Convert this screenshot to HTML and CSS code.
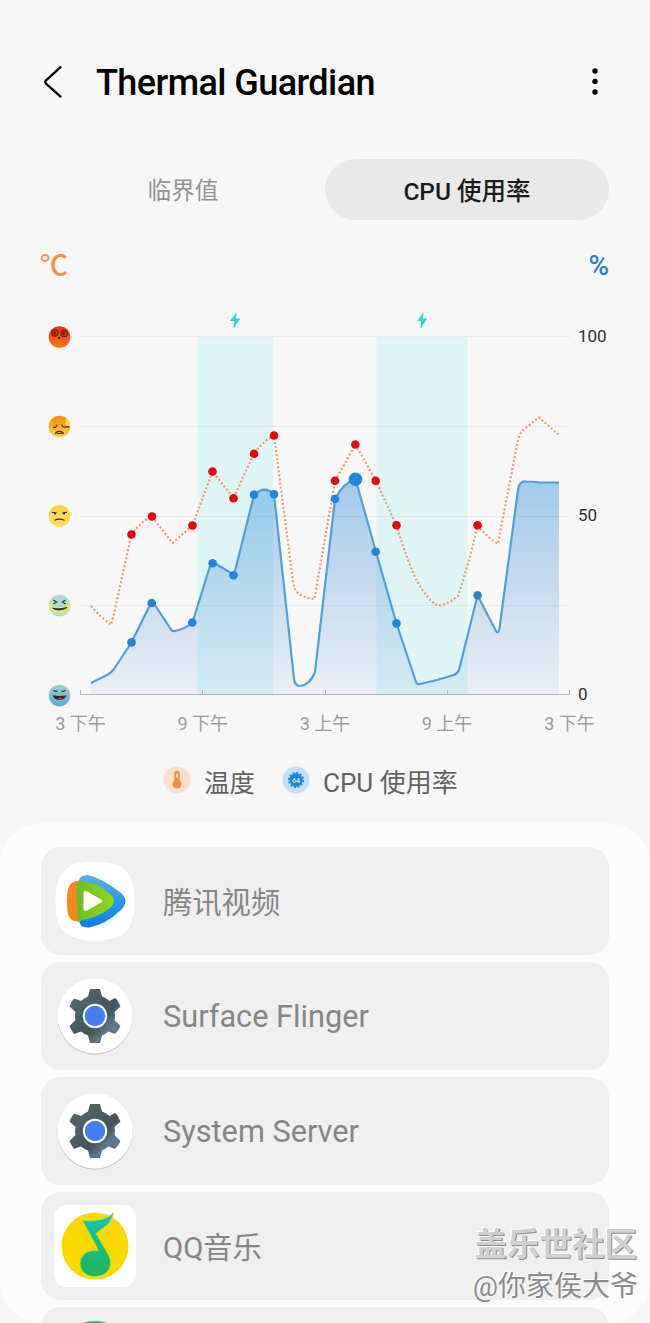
FILE: index.html
```
<!DOCTYPE html>
<html lang="zh-CN">

<head>
    <meta charset="UTF-8">
    <meta name="viewport" content="width=device-width, initial-scale=1.0">
    <title>Thermal Guardian</title>
    <link rel="stylesheet" href="styles.css">
</head>

<body>
    <header class="header">
        <svg class="back" width="20" height="34" viewBox="0 0 20 34">
            <path d="M17.5 2.2 L2.8 15.6 Q1.6 17 2.8 18.4 L17.5 31.6" />
        </svg>
        <h1 class="title">Thermal Guardian</h1>
        <svg class="more" width="8" height="28" viewBox="0 0 8 28">
            <circle cx="4" cy="3" r="2.7" />
            <circle cx="4" cy="13.5" r="2.7" />
            <circle cx="4" cy="24" r="2.7" />
        </svg>
    </header>

    <nav class="tabs">
        <div class="tab">临界值</div>
        <div class="tab active">CPU 使用率</div>
    </nav>

    <div class="units">
        <span class="unit-temp">℃</span>
        <span class="unit-cpu">%</span>
    </div>

    <svg class="chart" width="650" height="450" viewBox="0 295 650 450">
        <defs>
            <linearGradient id="area" gradientUnits="userSpaceOnUse" x1="0" y1="480" x2="0" y2="695">
                <stop offset="0" stop-color="#1b87dc" stop-opacity="0.4" />
                <stop offset="1" stop-color="#3d7ed0" stop-opacity="0.07" />
            </linearGradient>
            <linearGradient id="hot" x1="0" y1="0" x2="0" y2="1">
                <stop offset="0" stop-color="#e8301c" />
                <stop offset="1" stop-color="#ff7a0c" />
            </linearGradient>
            <linearGradient id="warm" x1="0" y1="0" x2="0" y2="1">
                <stop offset="0" stop-color="#fb8a0c" />
                <stop offset="1" stop-color="#fbd23c" />
            </linearGradient>
            <linearGradient id="mild" x1="0" y1="0" x2="0" y2="1">
                <stop offset="0" stop-color="#fbd02c" />
                <stop offset="1" stop-color="#fbe266" />
            </linearGradient>
            <radialGradient id="cool" cx="0.5" cy="0.2" r="0.75">
                <stop offset="0.45" stop-color="#a5dcd8" />
                <stop offset="0.75" stop-color="#e2ec62" />
                <stop offset="1" stop-color="#a5dcd8" />
            </radialGradient>
            <linearGradient id="cold" x1="0" y1="0" x2="0" y2="1">
                <stop offset="0" stop-color="#98d2cf" />
                <stop offset="1" stop-color="#64a9d4" />
            </linearGradient>
        </defs>

        <!-- charging periods -->
        <rect class="charging" x="197.500" y="337" width="75.500" height="358" />
        <rect class="charging" x="376.500" y="337" width="91" height="358" />
        <path class="bolt" d="M236.500 312 L230 321 H234.200 L233.500 328.500 L240.500 318.500 H236 Z" />
        <path class="bolt" d="M423.500 312 L417 321 H421.200 L420.500 328.500 L427.500 318.500 H423 Z" />

        <!-- grid -->
        <path class="grid" d="M80 336.500 H570 M80 426.500 H570 M80 516.500 H570 M80 605.500 H570" />
        <path class="axis" d="M80 694.500 H570 M80.500 690 V695 M202.500 690 V695 M325.500 690 V695 M447.500 690 V695 M569.500 690 V695" />

        <!-- cpu -->
        <path class="area" d="M91 683 L107 675 Q111 673 114 669 L131.500 642.500 L149 607 Q152 602 155 605 L170 628 Q172 632 175 631 Q185 629 192.500 622.500 L210 566 Q212.500 562 216 564 L231 573 Q233.500 576 235 571 L254 495 Q264 485 274 494 L294 679 Q295 686 300 686 Q310 685 315 672 L335 499 Q344 482 355.500 479 L376 552 L396.500 623.500 L415 679 Q416 685 420 684 L437 680 L454 675 Q457 674 459 670 L477.500 595.500 L495 629 Q498 636 499.500 628 L518 490 Q519 481 526 481.500 Q533 481.500 540 482.500 H559 V695 H91 Z" />
        <path class="line-cpu" d="M91 683 L107 675 Q111 673 114 669 L131.500 642.500 L149 607 Q152 602 155 605 L170 628 Q172 632 175 631 Q185 629 192.500 622.500 L210 566 Q212.500 562 216 564 L231 573 Q233.500 576 235 571 L254 495 Q264 485 274 494 L294 679 Q295 686 300 686 Q310 685 315 672 L335 499 Q344 482 355.500 479 L376 552 L396.500 623.500 L415 679 Q416 685 420 684 L437 680 L454 675 Q457 674 459 670 L477.500 595.500 L495 629 Q498 636 499.500 628 L518 490 Q519 481 526 481.500 Q533 481.500 540 482.500 H559" />

        <!-- temperature -->
        <path class="line-temp" d="M91 606 Q101 618 111 624.500 Q113 619 115 609 L131.500 534.500 Q140 522 152 516.500 L172.500 543 L192.500 525.500 L212.500 471.500 L233.500 498 L254 453.500 Q264 440 274 435.500 L293 581 Q294 592 301 595 Q308 599 314 599 Q315 597 316 590 L335 481 L355.500 444.500 L376 481 L396.500 525.500 Q408 563 417 581 Q427 599 437 605.500 Q446 606 458 596 Q470 560 477.500 525.500 Q490 540 498 543.500 L518 440 Q520 431 527 427 L539 417.500 L559 435" />

        <g class="dots-temp">
            <circle cx="131.500" cy="534.500" r="4.300" />
            <circle cx="152" cy="516.500" r="4.300" />
            <circle cx="192.500" cy="525.500" r="4.300" />
            <circle cx="212.500" cy="471.500" r="4.300" />
            <circle cx="233.500" cy="498.300" r="4.300" />
            <circle cx="254" cy="453.700" r="4.300" />
            <circle cx="274" cy="435.500" r="4.300" />
            <circle cx="335" cy="480.700" r="4.300" />
            <circle cx="355.300" cy="444.500" r="4.300" />
            <circle cx="375.700" cy="480.700" r="4.300" />
            <circle cx="396.500" cy="525.300" r="4.300" />
            <circle cx="477.600" cy="525.300" r="4.300" />
        </g>
        <g class="dots-cpu">
            <circle cx="131.500" cy="642.400" r="4.300" />
            <circle cx="151.700" cy="603" r="4.300" />
            <circle cx="192.300" cy="622.500" r="4.300" />
            <circle cx="212.600" cy="563.200" r="4.300" />
            <circle cx="233.500" cy="575.200" r="4.300" />
            <circle cx="254" cy="494.700" r="4.300" />
            <circle cx="274" cy="494.300" r="4.300" />
            <circle cx="335" cy="499" r="4.300" />
            <circle cx="355.500" cy="479.200" r="6.800" />
            <circle cx="375.700" cy="551.700" r="4.300" />
            <circle cx="396.500" cy="623.400" r="4.300" />
            <circle cx="477.600" cy="595.300" r="4.300" />
        </g>

        <!-- temperature faces -->
        <g class="face" transform="translate(59.500 337)">
            <circle r="10.800" fill="url(#hot)" />
            <g stroke="#74180c">
                <circle cx="-4.600" cy="-4" r="3.200" />
                <circle cx="-4.600" cy="-4" r="1.100" />
                <circle cx="4.600" cy="-3.500" r="3.200" />
                <circle cx="4.600" cy="-3.500" r="1.100" />
                <circle cx="-0.500" cy="1" r="0.600" />
            </g>
        </g>
        <g class="face" transform="translate(59.500 426.500)">
            <circle r="10.800" fill="url(#warm)" />
            <path class="hand" d="M6 -7 Q9 -9 9 -6 Q11 -3 10.500 0 L6.500 -1 Z" />
            <path d="M-6.500 0.700 Q-3 1.500 -2.500 -2 M2 -2 Q3.500 1.500 7 0.200 L10 0.500 M-4 7.500 Q-3.500 4.800 0 4.800 Q3.500 4.800 4 7.500 M-2.500 7 H2.500" />
        </g>
        <g class="face" transform="translate(59.500 516)">
            <circle r="10.800" fill="url(#mild)" />
            <ellipse cx="-4.500" cy="-2.400" rx="2.500" ry="1.400" fill="#fff" />
            <ellipse cx="4.500" cy="-2.400" rx="2.500" ry="1.400" fill="#fff" />
            <path d="M-7.500 -3.600 L-2.500 -3 M2.500 -3 L7.500 -3.600 M-5 4.200 Q0 2 5 4.200" />
            <path d="M-5.500 -2.400 H-3.500 M3.500 -2.400 H5.500" stroke-width="1.800" />
        </g>
        <g class="face" transform="translate(59.500 605.500)">
            <circle r="10.800" fill="url(#cool)" />
            <path d="M-6 -5.500 L-3 -3.500 L-6 -1.500 M6 -5.500 L3 -3.500 L6 -1.500 M-7 2.500 Q0 6.300 7.500 2 Q0 4.500 -7 2.500" />
        </g>
        <g class="face" transform="translate(59.500 695.500)">
            <circle r="10.800" fill="url(#cold)" />
            <path d="M-6 -5.500 Q-4.500 -3.500 -2 -4.500 M2 -4.500 Q4.500 -3.500 6 -5.500" />
            <path d="M-6 0.500 Q0 1.500 6 0.500 Q4.500 3.800 0 3.500 Q-4.500 3.800 -6 0.500 Z" fill="#251c2b" />
            <path d="M-1 2.800 H2" stroke="#ea5a57" />
        </g>

        <g class="y-labels">
            <text x="578" y="342">100</text>
            <text x="578" y="521">50</text>
            <text x="578" y="700">0</text>
        </g>
        <g class="x-labels">
            <text x="80.500" y="729.500">3 下午</text>
            <text x="202.700" y="729.500">9 下午</text>
            <text x="325" y="729.500">3 上午</text>
            <text x="447" y="729.500">9 上午</text>
            <text x="569.500" y="729.500">3 下午</text>
        </g>
    </svg>

    <div class="legend">
        <svg width="28" height="28" viewBox="0 0 28 28">
            <circle cx="14" cy="14" r="13.500" fill="#fae0cd" />
            <path d="M11.300 7.500 a2.700 2.700 0 0 1 5.400 0 V14.500 a4.500 4.500 0 1 1 -5.400 0 Z" fill="#f58a42" />
            <path d="M14 7.500 V12" stroke="#fae0cd" stroke-width="1.600" />
        </svg>
        <span class="legend-temp">温度</span>
        <svg width="28" height="28" viewBox="0 0 28 28">
            <circle cx="14" cy="14" r="13.500" fill="#c3def5" />
            <circle cx="14" cy="14" r="6.500" fill="#1f86de" />
            <circle cx="14" cy="14" r="7" fill="none" stroke="#1f86de" stroke-width="2" stroke-dasharray="2.100 1.565" />
            <text x="14" y="16.500" class="chip">64</text>
        </svg>
        <span>CPU 使用率</span>
    </div>

    <main class="panel">
        <div class="card">
            <svg class="icon" width="82" height="82" viewBox="0 0 82 82">
                <defs>
                    <linearGradient id="tv-blue" x1="0" y1="0" x2="0" y2="1">
                        <stop offset="0" stop-color="#55b3e8" />
                        <stop offset="1" stop-color="#087cf0" />
                    </linearGradient>
                    <linearGradient id="tv-orange" x1="0" y1="0" x2="0" y2="1">
                        <stop offset="0" stop-color="#ef8a2c" />
                        <stop offset="1" stop-color="#ff8508" />
                    </linearGradient>
                    <linearGradient id="tv-green" x1="0" y1="0" x2="1" y2="0">
                        <stop offset="0" stop-color="#6abc25" />
                        <stop offset="1" stop-color="#91db18" />
                    </linearGradient>
                </defs>
                <path d="M41 1.500 C70 1.500 80.500 12 80.500 41 C80.500 70 70 80.500 41 80.500 C12 80.500 1.500 70 1.500 41 C1.500 12 12 1.500 41 1.500 Z" fill="#fff" />
                <path d="M25 23 Q24 15 34 15 Q48 18 67 33 Q76 41 67 50 Q51 65 35 67.500 Q25 68 25 60 Z" fill="url(#tv-blue)" />
                <path d="M27 20.500 Q15 20 13.500 31 Q12 41 13.500 52 Q15 63 27 61.500 Z" fill="url(#tv-orange)" />
                <path d="M23.500 22 Q24 20.500 29 21 Q44 23 56 34 Q64 41 56 48 Q44 58 24 61 Q21.500 41 23.500 22 Z" fill="url(#tv-green)" />
                <path d="M29.500 32.500 Q30 30 34 32 L47 39.500 Q49.500 41 47 42.500 L34 50 Q30 52 29.500 49.500 Z" fill="#fff" />
            </svg>
            <span class="name name-cn">腾讯视频</span>
        </div>
        <div class="card">
            <svg class="icon" width="82" height="82" viewBox="0 0 82 82">
                <defs>
                    <linearGradient id="gear" x1="0" y1="0" x2="1" y2="1">
                        <stop offset="0.2" stop-color="#526269" />
                        <stop offset="0.6" stop-color="#43545c" />
                        <stop offset="0.75" stop-color="#60788a" />
                    </linearGradient>
                </defs>
                <circle cx="41" cy="42.200" r="37.500" fill="#c8c8c8" />
                <circle cx="41" cy="41" r="37.500" fill="#fff" />
                <g id="cog">
                    <path d="M36 14 H46 L48 21.500 Q52 22.500 55.500 26 L61 23 Q63 23.500 66.500 31.500 L60.500 37 Q61.500 41 60.500 45 L66.500 51 Q65 55 61 59 L54.500 56.500 Q51.500 59 48 60.500 L46 68 H36 L34 60.500 Q30 59 27 56.500 L20 59 Q17 55 15.500 51 L21.500 45 Q20.500 41 21.500 37 L15.500 31.500 Q17 27 20 23.500 L27 26 Q30 23 34 21.500 Z" fill="url(#gear)" />
                    <circle cx="41" cy="41" r="12.200" fill="#fff" />
                    <circle cx="41" cy="41" r="10.200" fill="#437df0" />
                </g>
            </svg>
            <span class="name">Surface Flinger</span>
        </div>
        <div class="card">
            <svg class="icon" width="82" height="82" viewBox="0 0 82 82">
                <circle cx="41" cy="42.200" r="37.500" fill="#c8c8c8" />
                <circle cx="41" cy="41" r="37.500" fill="#fff" />
                <use href="#cog" />
            </svg>
            <span class="name">System Server</span>
        </div>
        <div class="card">
            <svg class="icon" width="82" height="82" viewBox="0 0 82 82">
                <defs>
                    <linearGradient id="note" gradientUnits="userSpaceOnUse" x1="0" y1="10" x2="0" y2="72">
                        <stop offset="0" stop-color="#16c3bb" />
                        <stop offset="1" stop-color="#1bb65a" />
                    </linearGradient>
                </defs>
                <rect x="0" y="0" width="82" height="82" rx="13" fill="#fff" />
                <circle cx="41" cy="41" r="33.500" fill="#fbd900" />
                <path d="M59.500 8 Q54 13.500 45 15 Q37 16.300 28.500 15.500 L44.500 45.500 C33 44 26 50.500 26 58.500 C26 66.500 32.500 71.500 41 71.500 C50 71.500 56.500 66 56.500 58 C56.500 54 55.500 52 54 49 L42 28.500 Q46 25 50 22.500 Q57 18 59.500 8 Z" fill="url(#note)" stroke="#b8dd16" stroke-width="1" />
            </svg>
            <span class="name name-cn">QQ音乐</span>
        </div>
        <div class="card">
            <svg class="icon" width="82" height="82" viewBox="0 0 82 82">
                <ellipse cx="41" cy="35" rx="38" ry="34" fill="#20c573" />
            </svg>
        </div>
    </main>

    <div class="watermark">
        <div class="site">盖乐世社区</div>
        <div class="author">@你家侯大爷</div>
    </div>
</body>

</html>
```
FILE: styles.css
```
* {
    box-sizing: border-box;
}

body {
    position: relative;
    width: 650px;
    height: 1323px;
    margin: 0;
    overflow: hidden;
    background-color: #f7f7f7;
    font-family: Roboto, "Noto Sans CJK SC", sans-serif;
    color: #000;
}

.header {
    display: flex;
    align-items: center;
    height: 159px;
    padding: 4px 51px 0 43px;
}

.back {
    fill: none;
    stroke: #000;
    stroke-width: 2.3;
    stroke-linecap: round;
}

.title {
    flex: 1;
    margin: 0 0 0 33px;
    padding-top: 3px;
    font-size: 36px;
    font-weight: 500;
    line-height: 44px;
    letter-spacing: -0.57px;
}

.tabs {
    display: flex;
    height: 61px;
    padding: 0 41px;
}

.tab {
    flex: 1;
    padding-top: 2px;
    border-radius: 31px;
    font-size: 23.7px;
    line-height: 61px;
    text-align: center;
    color: #939393;
}

.tab.active {
    background-color: #e9e9e9;
    font-size: 24.5px;
    font-weight: 500;
    color: #1c1c1c;
}

.units {
    display: flex;
    justify-content: space-between;
    height: 75px;
    padding: 26px 41px 0 40px;
    font-size: 28px;
    font-weight: 500;
    line-height: 42px;
}

.unit-temp {
    color: #f0904d;
}

.unit-cpu {
    font-size: 28px;
    line-height: 40px;
    color: #2482cc;
}

/* chart */
.chart {
    display: block;
}

.charging {
    fill: #dff4f4;
}

.bolt {
    fill: #2fd9cd;
}

.grid,
.axis,
.line-cpu,
.line-temp {
    fill: none;
}

.grid {
    stroke: #000;
    stroke-opacity: 0.05;
}

.axis {
    stroke: #b5b8bc;
}

.area {
    fill: url(#area);
}

.line-cpu {
    stroke: #539fd8;
    stroke-width: 2.2;
    stroke-linejoin: round;
}

.line-temp {
    stroke: #eb9d6c;
    stroke-width: 2.2;
    stroke-dasharray: 2 2.1;
}

.dots-temp {
    fill: #e5050c;
}

.dots-cpu {
    fill: #2185dc;
}

.face {
    fill: none;
    stroke: #3c2c20;
    stroke-width: 1.2;
}

.face > circle,
.face > ellipse {
    stroke: none;
}

.hand {
    fill: #fbd26c;
    stroke: none;
}

.y-labels {
    font-size: 17px;
    fill: #303030;
}

.x-labels {
    font-size: 18px;
    text-anchor: middle;
    fill: #9b9b9b;
}

.legend {
    display: flex;
    align-items: center;
    height: 78px;
    padding: 0 0 8px 163px;
    font-size: 26px;
    color: #636363;
}

.legend span {
    margin-left: 13px;
}

.legend .legend-temp {
    margin-right: 27px;
    font-size: 25.5px;
}

.chip {
    font-size: 7px;
    font-weight: 700;
    text-anchor: middle;
    fill: #c3def5;
}

/* app list */
.panel {
    display: flex;
    flex-direction: column;
    gap: 7px;
    height: 500px;
    padding: 24px 41px 0;
    overflow: hidden;
    border-radius: 42px;
    background-color: #fcfcfc;
}

.card {
    display: flex;
    flex-shrink: 0;
    align-items: center;
    gap: 27px;
    height: 108px;
    padding-left: 13px;
    border-radius: 20px;
    background-color: #efefef;
}

.name {
    font-size: 30.7px;
    color: #868686;
}

.name-cn {
    padding-bottom: 3px;
    font-size: 29.3px;
}

.watermark {
    position: absolute;
    right: 12px;
    bottom: 15px;
    text-align: right;
}

.site {
    padding-right: 1px;
    font-size: 32.5px;
    font-weight: 700;
    line-height: 41px;
    color: #d0d0d0;
    text-shadow: 1px 1px 0 #8c8c8c, -1px -1px 0 #fff;
}

.author {
    font-size: 28px;
    line-height: 42px;
    color: #8c8c8c;
    text-shadow: -1px -1px 0 #fff;
}
```
